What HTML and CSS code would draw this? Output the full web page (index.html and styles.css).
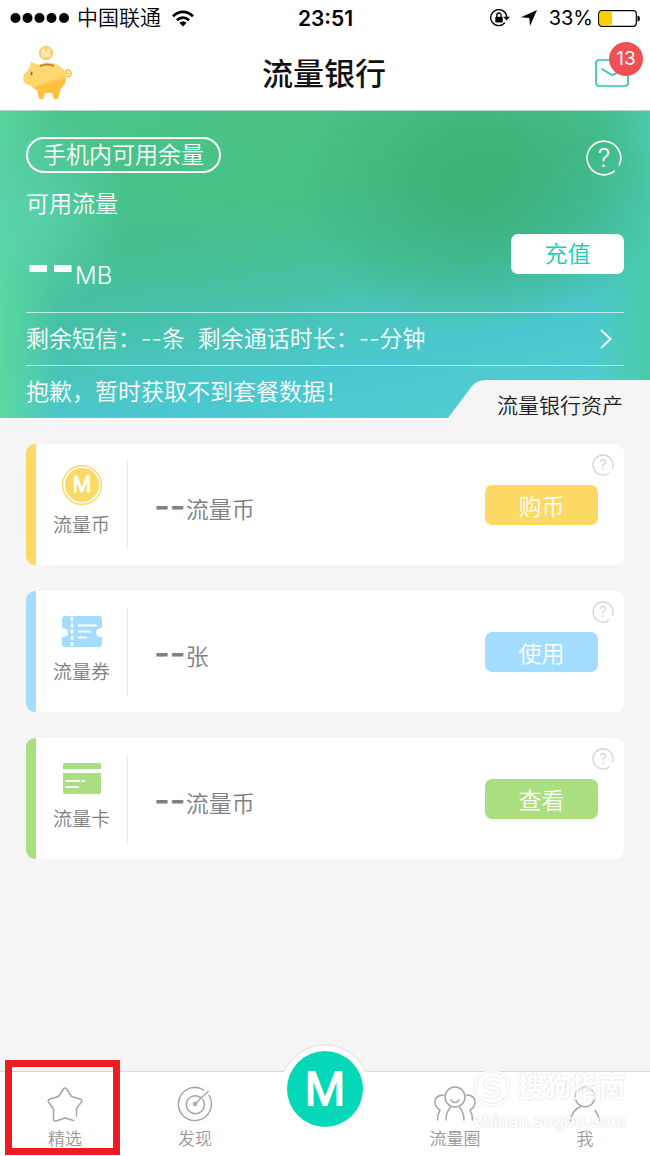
FILE: index.html
```html
<!DOCTYPE html>
<html lang="zh-CN">
<head>
<meta charset="utf-8">
<meta name="viewport" content="width=device-width, initial-scale=1">
<title>流量银行</title>
<link rel="stylesheet" href="styles.css">
</head>
<body>
<div class="status">
  <div class="status-left">
    <svg width="60" height="12" viewBox="0 0 60 12" aria-hidden="true"><circle cx="5.500" cy="6" r="5"/><circle cx="17.500" cy="6" r="5"/><circle cx="29.500" cy="6" r="5"/><circle cx="41.500" cy="6" r="5"/><circle cx="54" cy="6" r="5"/></svg>
    <span class="carrier">中国联通</span>
    <svg width="22" height="17" viewBox="0 0 22 17" fill="none" stroke="#000" stroke-width="2.800" aria-hidden="true"><path d="M1 6.200C7 .3 15 .3 21 6.200"/><path d="M5 10.300C8.500 6.700 13.500 6.700 17 10.300"/><path d="M11 16.500L7.300 12.700Q11 9.600 14.700 12.700Z" fill="#000" stroke="none"/></svg>
  </div>
  <span class="clock">23:51</span>
  <div class="status-right">
    <svg width="20" height="18" viewBox="0 0 20 18" aria-hidden="true"><path d="M14.800 13.800A8 8 0 1 1 16.700 8" fill="none" stroke="#000" stroke-width="1.400"/><path d="M13.200 7.700H20L16.700 11.500Z"/><rect x="5.300" y="7.800" width="7.400" height="5.700" rx=".8"/><path d="M6.800 8V6.200a2.200 2.200 0 0 1 4.400 0V8" fill="none" stroke="#000" stroke-width="1.300"/></svg>
    <svg class="arrow" width="16" height="16" viewBox="0 0 16 16" aria-hidden="true"><path d="M16 0L9 16L8.300 8L0 7.200Z"/></svg>
    <span class="percent">33%</span>
    <svg width="43" height="17" viewBox="0 0 43 17" aria-hidden="true"><rect x=".7" y=".7" width="37.600" height="15.600" rx="3" fill="#fff" stroke="#000" stroke-width="1.200"/><rect x="2" y="2" width="12" height="13" rx="1" fill="#fc0"/><path d="M39.500 5.500Q42 6 42 8.500T39.500 11.500Z"/></svg>
  </div>
</div>

<header class="header">
  <a class="piggy" href="#" aria-label="存钱罐">
    <svg width="50" height="54" viewBox="0 0 50 54">
      <defs><linearGradient id="pig" x1=".3" y1="0" x2=".75" y2="1"><stop offset=".6" stop-color="#ffd770"/><stop offset=".72" stop-color="#fdc13e"/></linearGradient></defs>
      <path d="M41 30Q48 32 48 27Q47 22 43 25Q43 29 46 27" fill="none" stroke="#fdc13e" stroke-width="1.600"/>
      <path d="M14 42L16 53H20L22 47H29L31 53H35L38 42Z" fill="#fdc13e"/>
      <path d="M8 16L15 19Q24 15 33 18Q43 22 43 32Q43 42 31 46Q17 49 8 40L1 37Q-1 31 2 27Q6 24 8 16Z" fill="url(#pig)"/>
      <path d="M17 20Q24 17 31 20" fill="none" stroke="#bd8a28" stroke-width="2"/>
      <ellipse cx="8.500" cy="27.500" rx="1" ry="2" fill="#a57520"/>
      <circle cx="23" cy="7" r="6.500" fill="#ffd770" stroke="#fdc13e"/>
      <text class="mark" x="23" y="11" font-size="10">M</text>
    </svg>
  </a>
  <h1 class="title">流量银行</h1>
  <a class="mail" href="#" aria-label="消息">
    <svg width="34" height="28" viewBox="0 0 34 28" fill="none" stroke="#28c6ad" stroke-width="1.700"><rect x="1" y="1" width="32" height="26" rx="3"/><path d="M7 10L16 15.500Q18 16.500 20 15L27 10" stroke-linecap="round"/></svg>
    <span class="badge">13</span>
  </a>
</header>

<main class="main">
  <section class="hero">
    <div class="hero-top">
      <div>
        <button class="pill" type="button">手机内可用余量</button>
        <p class="hero-label">可用流量</p>
      </div>
      <a class="help" href="#" aria-label="帮助"><svg width="36" height="36" viewBox="0 0 36 36"><path d="M33.300 24.800A16.800 16.800 0 1 0 28.300 31.200" fill="none" stroke="#fff" stroke-width="1.600" stroke-linecap="round"/><text x="18" y="27" font-size="25" fill="#fff">?</text></svg></a>
    </div>
    <div class="hero-amount">
      <p class="amount"><b>--</b>MB</p>
      <button class="recharge" type="button">充值</button>
    </div>
    <a class="remain" href="#">
      <span>剩余短信：--条&nbsp; 剩余通话时长：--分钟</span>
      <svg width="12" height="20" viewBox="0 0 12 20" fill="none" stroke="#fff" stroke-width="1.800"><path d="M1 1L10.500 10L1 19"/></svg>
    </a>
    <div class="hero-bottom">
      <p class="notice">抱歉，暂时获取不到套餐数据！</p>
      <h2 class="assets">
        <svg viewBox="0 0 202 38" preserveAspectRatio="none" aria-hidden="true"><path d="M0 38L24 6Q29 0 38 0H202V38Z" fill="#f5f5f5"/></svg>
        <span>流量银行资产</span>
      </h2>
    </div>
  </section>

  <section class="cards">
    <article class="card yellow">
      <div class="kind">
        <svg width="42" height="40" viewBox="0 0 42 40"><circle cx="21" cy="20" r="19.300" fill="#fff" stroke="#fcd964" stroke-width="1.400"/><circle cx="21" cy="20" r="17" fill="#fcd964"/><text class="mark mid" x="21" y="27" font-size="21">M</text></svg>
        <span>流量币</span>
      </div>
      <p class="value"><b>--</b>流量币</p>
      <button class="action" type="button">购币</button>
      <a class="tip" href="#" aria-label="流量币说明"><svg width="22" height="22" viewBox="0 0 22 22"><path d="M20.300 14.700A10 10 0 1 0 17.400 18.700" fill="none" stroke="#d5d5d5" stroke-width="1.300"/><text x="11" y="16" font-size="15" fill="#ccc">?</text></svg></a>
    </article>
    <article class="card blue">
      <div class="kind">
        <svg width="42" height="40" viewBox="0 0 42 40"><path d="M4 4H38Q41 4 41 7V16Q35 16 35 20.500T41 25V32Q41 35 38 35H4Q1 35 1 32V25Q7 25 7 20.500T1 16V7Q1 4 4 4Z" fill="#a2dcfe"/><path d="M11 5V35" stroke="#fff" stroke-width="2.500" stroke-dasharray="4 2.300"/><path d="M18 13.500H35M18 19.500H29M18 25.500H25" stroke="#fff" stroke-width="2.200" stroke-linecap="round"/></svg>
        <span>流量券</span>
      </div>
      <p class="value"><b>--</b>张</p>
      <button class="action" type="button">使用</button>
      <a class="tip" href="#" aria-label="流量券说明"><svg width="22" height="22" viewBox="0 0 22 22"><path d="M20.300 14.700A10 10 0 1 0 17.400 18.700" fill="none" stroke="#d5d5d5" stroke-width="1.300"/><text x="11" y="16" font-size="15" fill="#ccc">?</text></svg></a>
    </article>
    <article class="card green">
      <div class="kind">
        <svg width="42" height="40" viewBox="0 0 42 40"><path d="M2 10V6Q2 4 4 4H38Q40 4 40 6V10ZM2 14H40V33Q40 35 38 35H4Q2 35 2 33Z" fill="#a9df80"/><path d="M5 22H18M21 22H23.500M5 28H17" stroke="#fff" stroke-width="2.200" stroke-linecap="round"/></svg>
        <span>流量卡</span>
      </div>
      <p class="value"><b>--</b>流量币</p>
      <button class="action" type="button">查看</button>
      <a class="tip" href="#" aria-label="流量卡说明"><svg width="22" height="22" viewBox="0 0 22 22"><path d="M20.300 14.700A10 10 0 1 0 17.400 18.700" fill="none" stroke="#d5d5d5" stroke-width="1.300"/><text x="11" y="16" font-size="15" fill="#ccc">?</text></svg></a>
    </article>
  </section>
</main>

<nav class="tabs">
  <a class="tab marked" href="#">
    <svg width="36" height="36" viewBox="0 0 36 36"><path d="M26.500 34.500L18 32L9 35Q6.500 35.500 6.500 33V23L1.500 16Q.5 14 3 13L11.500 10.500L16.500 3Q18 1 19.500 3L24.500 10.500L33 13Q35.500 14 34.500 16L29.500 22.500V30"/></svg>
    <span>精选</span>
  </a>
  <a class="tab" href="#">
    <svg width="36" height="36" viewBox="0 0 36 36"><path d="M26.500 3.900A16.500 16.500 0 1 0 32 9.400M23.500 11.300A9 9 0 1 0 25.800 13.600M18 18L31 5.500"/><circle cx="18" cy="18" r="1.500"/></svg>
    <span>发现</span>
  </a>
  <a class="center" href="#" aria-label="流量银行">
    <svg width="90" height="90" viewBox="0 0 90 90"><circle cx="45" cy="45" r="44.500" fill="#fff"/><path d="M4.500 27A44.500 44.500 0 0 1 85.500 27" fill="none" stroke="#ddd"/><circle cx="45" cy="45" r="38" fill="#05d8b8"/><text class="mark big" x="45" y="61" font-size="46">M</text></svg>
  </a>
  <a class="tab" href="#">
    <svg width="42" height="36" viewBox="0 0 42 36"><circle cx="21" cy="11" r="10"/><path d="M17 14Q21 19 25 14M12 34Q12 26 17 20.500M30 34Q30 26 25 20.500M9.500 9Q1 9 1 16.500Q1 21 6 24Q3.500 28 3.500 34M32.500 9Q41 9 41 16.500Q41 21 36 24Q38.500 28 38.500 34"/></svg>
    <span>流量圈</span>
  </a>
  <a class="tab" href="#">
    <svg width="36" height="36" viewBox="0 0 36 36"><circle cx="18" cy="11" r="9.800"/><path d="M3.500 35Q4.500 24 14 20.500M28 24.500Q31 28 32.500 34"/></svg>
    <span>我</span>
  </a>
  <div class="watermark" aria-hidden="true">
    <svg width="38" height="38" viewBox="0 0 38 38" fill="none"><circle cx="19" cy="19" r="17" stroke="#e9e9e9" stroke-width="4"/><circle cx="19" cy="19" r="17" stroke="#fff" stroke-width="2"/><path d="M27 12Q19 8 13 12Q10 17 19 19T25 26Q18 30 11 26" stroke="#e9e9e9" stroke-width="5"/><path d="M27 12Q19 8 13 12Q10 17 19 19T25 26Q18 30 11 26" stroke="#fff" stroke-width="3"/></svg>
    <strong>搜狗指南</strong>
    <small>zhinan.sogou.com</small>
  </div>
</nav>
</body>
</html>
```
FILE: styles.css
```css
* { box-sizing: border-box; }

body {
  margin: 0;
  min-height: 100vh;
  display: flex;
  flex-direction: column;
  background: #f5f5f5;
  color: #808080;
  font-family: Inter, "Noto Sans CJK SC", sans-serif;
  font-weight: 350;
}

h1, h2, p { margin: 0; font-weight: inherit; }
a { color: inherit; text-decoration: none; }
button { font: inherit; border: 0; padding: 0; cursor: pointer; }
svg { display: block; flex: none; }
svg text { text-anchor: middle; font-family: Inter, sans-serif; font-weight: 300; }
svg .mark { font-family: "Open Sans", sans-serif; font-weight: 400; fill: #fff; stroke: #fff; stroke-width: 0; stroke-linejoin: round; }
svg .mid { stroke-width: 1; }
svg .big { stroke-width: 2; }

.status {
  display: grid;
  grid-template-columns: 1fr auto 1fr;
  align-items: center;
  height: 36px;
  padding: 0 9px 0 10px;
  background: #fff;
  color: #000;
}
.status-left, .status-right { display: flex; align-items: center; }
.status-right { justify-content: flex-end; }
.carrier { margin: 0 11px 0 7px; font-size: 21px; line-height: 32px; }
.clock { font-size: 21px; font-weight: 600; }
.arrow { margin: 0 12px 0 11px; }
.percent { margin-right: 5px; font-size: 20px; font-weight: 400; }

.header {
  display: grid;
  grid-template-columns: 1fr auto 1fr;
  align-items: center;
  height: 75px;
  padding: 0 21px 0 23px;
  background: #fff;
  border-bottom: 1px solid #b5d8c8;
}
.title { padding: 2px 4px 0 0; color: #111; font-size: 31px; font-weight: 500; line-height: 40px; }
.mail { position: relative; justify-self: end; }
.badge {
  position: absolute;
  top: -17px;
  right: -14px;
  width: 34px;
  height: 34px;
  border-radius: 50%;
  background: #f05052;
  color: #fff;
  font-size: 19px;
  font-weight: 400;
  line-height: 34px;
  text-align: center;
}

.main { flex: 1; }

.hero {
  color: #fff;
  font-size: 23px;
  line-height: 32px;
  background:
    radial-gradient(ellipse 28% 48% at 74% 24%, #3bb077 0%, #3bb077aa 40%, #3bb07700 100%),
    radial-gradient(ellipse 50% 60% at 42% 5%, #4ac383 0%, #4ac38300 100%),
    radial-gradient(ellipse 14% 34% at 6% 32%, #5bd2b2 0%, #5bd2b200 100%),
    linear-gradient(90deg, #5bd9a0 0%, #5bd9a000 9%),
    linear-gradient(270deg, #49caa9 0%, #49caa900 9%),
    linear-gradient(168deg, #4dc690 0%, #45be90 35%, #46c2ac 55%, #4bc8cf 74%, #54d0d2 100%);
}
.hero-top {
  display: flex;
  justify-content: space-between;
  padding: 26px 26px 0;
}
.pill {
  height: 36px;
  padding: 0 15px;
  border: 2px solid #fff;
  border-radius: 18px;
  background: none;
  color: #fff;
  line-height: 32px;
}
.hero-label { margin-top: 15px; }
.help { margin: 3px 2px 0 0; }
.hero-amount {
  display: flex;
  justify-content: space-between;
  align-items: flex-start;
  height: 93px;
  margin: 0 26px;
  border-bottom: 1px solid #c0e9e9;
}
.amount { font-size: 24px; line-height: 92px; }
.amount b { font-size: 52px; font-weight: 800; }
.recharge {
  width: 113px;
  height: 40px;
  margin-top: 14px;
  border-radius: 7px;
  background: #fff;
  color: #0fd3b2;
}
.remain {
  display: flex;
  justify-content: space-between;
  align-items: center;
  height: 53px;
  margin: 0 26px;
  padding-right: 12px;
  border-bottom: 1px solid #c0e9e9;
}
.hero-bottom {
  display: flex;
  justify-content: space-between;
  align-items: flex-end;
  height: 52px;
  padding-left: 26px;
}
.notice { align-self: center; }
.assets {
  position: relative;
  padding: 14px 27px 0 49px;
  color: #222;
  font-size: 21px;
  line-height: 24px;
}
.assets svg { position: absolute; inset: 0; width: 100%; height: 100%; }
.assets span { position: relative; }

.cards { display: grid; gap: 26px; padding: 26px; }
.card {
  --tone: #fcd964;
  position: relative;
  display: flex;
  align-items: center;
  height: 121px;
  padding-right: 26px;
  overflow: hidden;
  border-left: 10px solid var(--tone);
  border-radius: 9px;
  background: #fff;
}
.blue { --tone: #a2dcfe; }
.green { --tone: #a9df80; }
.kind {
  display: flex;
  flex-direction: column;
  align-items: center;
  gap: 6px;
  width: 92px;
  height: 88px;
  padding-top: 4px;
  border-right: 1px solid #e8e8e8;
  font-size: 19px;
  line-height: 30px;
}
.value { flex: 1; padding: 6px 0 0 26px; font-size: 23px; line-height: 40px; }
.value b { font-size: 34px; font-weight: 600; }
.action {
  width: 113px;
  height: 40px;
  border-radius: 7px;
  background: var(--tone);
  color: #fff;
  font-size: 23px;
}
.tip { position: absolute; top: 10px; right: 10px; }

.tabs {
  position: relative;
  display: grid;
  grid-template-columns: repeat(5, 1fr);
  height: 85px;
  border-top: 1px solid #d9d9d9;
  background: #fff;
  color: #999;
}
.tab {
  position: relative;
  display: flex;
  flex-direction: column;
  align-items: center;
  gap: 4px;
  padding-top: 14px;
  font-size: 17px;
  line-height: 26px;
}
.tab svg { fill: none; stroke: #a5a5a5; stroke-width: 1.5; stroke-linecap: round; stroke-linejoin: round; }
.center { justify-self: center; margin-top: -28px; }
.marked::after {
  content: "";
  position: absolute;
  inset: -12px 10px 1px 5px;
  border: 7px solid #ed1c24;
}
.watermark {
  position: absolute;
  top: -3px;
  right: 24px;
  display: grid;
  grid-template-columns: 38px auto;
  column-gap: 6px;
  align-items: center;
  color: #fff;
  opacity: 0.7;
  pointer-events: none;
  text-shadow: 0 0 2px #ccc, 0 0 1px #ddd;
}
.watermark strong { font-size: 27px; font-weight: 700; line-height: 38px; }
.watermark small { grid-column: 1 / 3; font-size: 17px; font-weight: 600; line-height: 28px; }
```
